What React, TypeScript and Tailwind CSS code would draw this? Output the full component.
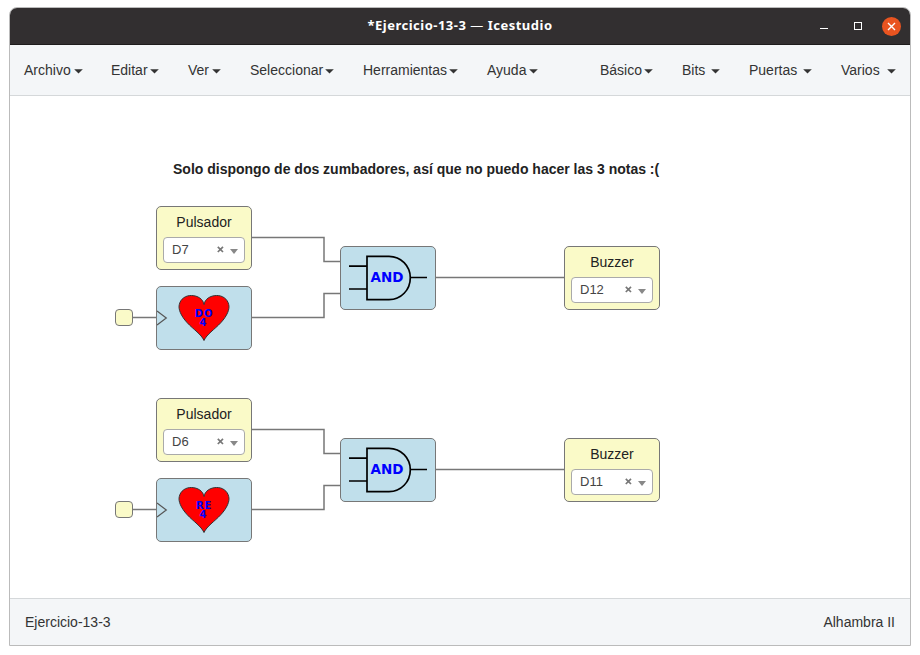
import React from "react";

const sans = "font-['Liberation_Sans',Arial,sans-serif]";

function Caret() {
  return (
    <svg width="9" height="5" viewBox="0 0 9 5" className="mt-[2px] shrink-0">
      <path d="M0.2 0.3H8.8L4.5 4.6Z" fill="#333" />
    </svg>
  );
}

function MenuItem({ label, className }: { label: string; className: string }) {
  return (
    <button className={`flex items-center justify-between whitespace-nowrap ${className}`}>
      <span>{label}</span>
      <Caret />
    </button>
  );
}

function PinBlock({ name, pin, className }: { name: string; pin: string; className: string }) {
  return (
    <div className={`absolute flex h-16 w-24 flex-col rounded-[5px] border border-[#777] bg-[#fafac8] px-1.5 ${className}`}>
      <div className="mt-[5px] text-center text-[14px] leading-5 text-[#222]">{name}</div>
      <div className="mt-[5px] flex h-[26px] items-center rounded-[4px] border border-[#aaa] bg-white pl-2 text-[13px] text-[#444]">
        <span className="w-[45px]">{pin}</span>
        <svg width="7" height="7" viewBox="0 0 7 7" className="-mt-px">
          <path d="M0.8 0.8L6 6M6 0.8L0.8 6" stroke="#777" strokeWidth="1.7" />
        </svg>
        <svg width="8" height="5" viewBox="0 0 8 5" className="mt-[3px] ml-[6px]">
          <path d="M0 0H8L4 5Z" fill="#888" />
        </svg>
      </div>
    </div>
  );
}

function NoteBlock({ note, className }: { note: string; className: string }) {
  return (
    <div className={`absolute h-16 w-24 rounded-[5px] border border-[#777] bg-[#c0dfeb] ${className}`}>
      <svg width="94" height="62" viewBox="0 0 94 62" className="block">
        <path d="M0 24L9.3 31L0 38" fill="none" stroke="#555" strokeWidth="1.2" />
        <path
          d="M47 53.5C44 47 37 43 30 35.5C24 29 21 22 22.3 17.5C23.5 12 28.5 8.3 34.5 8.5C41 8.7 46 12 47 17.5C48 12 53 8.7 59.5 8.5C65.5 8.3 70.5 12 71.7 17.5C73 22 70 29 64 35.5C57 43 50 47 47 53.5Z"
          fill="#f00"
          stroke="#333"
        />
        <g fill="#00f" fontFamily="'DejaVu Sans',sans-serif" fontWeight="bold" fontSize="10" textAnchor="middle">
          <text x="47" y="29.7" letterSpacing="0.8">{note}</text>
          <text x="46" y="39">4</text>
        </g>
      </svg>
    </div>
  );
}

function AndBlock({ className }: { className: string }) {
  return (
    <div className={`absolute h-16 w-24 rounded-[5px] border border-[#777] bg-[#c0dfeb] ${className}`}>
      <svg width="94" height="62" viewBox="0 0 94 62" className="block">
        <g fill="none" stroke="#000" strokeWidth="1.7">
          <path d="M26 9.3H48C60 9.3 69.3 19 69.3 30.7C69.3 43 60 52.6 48 52.6H26Z" />
          <path d="M8 19.2H26M8 42H26M69 30.5H86" />
        </g>
        <text x="46" y="35" textAnchor="middle" fill="#00f" fontFamily="'DejaVu Sans',sans-serif" fontWeight="bold" fontSize="13.5">
          AND
        </text>
      </svg>
    </div>
  );
}

function Circuit({ note, inPin, outPin, className }: { note: string; inPin: string; outPin: string; className: string }) {
  return (
    <div className={`absolute left-[105px] h-36 w-[545px] ${className}`}>
      <svg width="545" height="144" className="absolute inset-0">
        <g fill="none" stroke="#777" strokeWidth="1.5">
          <path d="M17 111.5H41" />
          <path d="M137 31.5H209V55.5H225" />
          <path d="M137 111.5H209V87.5H225" />
          <path d="M321 71.5H449" />
        </g>
      </svg>
      <div className="absolute top-[103px] left-0 h-[17px] w-[18px] rounded-[4px] border border-[#777] bg-[#fafac8]" />
      <PinBlock name="Pulsador" pin={inPin} className="top-0 left-[41px]" />
      <NoteBlock note={note} className="top-20 left-[41px]" />
      <AndBlock className="top-10 left-[225px]" />
      <PinBlock name="Buzzer" pin={outPin} className="top-10 left-[449px]" />
    </div>
  );
}

export default function App() {
  return (
    <div className={`h-[655px] w-[920px] bg-white pt-[7px] pl-[9px] ${sans}`}>
      <div className="flex h-[639px] w-[902px] flex-col overflow-hidden rounded-t-[8px] border border-[#bbb] bg-white">
        <header className="relative flex h-[37px] shrink-0 items-center justify-end border-b border-[#1e1c1c] bg-[#322f30] pr-[9px]">
          <h1 className="absolute inset-x-0 text-center font-['Noto_Sans',sans-serif] text-[13px] font-bold tracking-[0.5px] text-white">
            *Ejercicio-13-3 <span className="font-normal">—</span> Icestudio
          </h1>
          <div className="flex items-center">
            <span className="mt-[5px] mr-[26px] h-px w-2 bg-white" />
            <span className="mr-[20px] h-2 w-2 border border-white" />
            <span className="flex h-[19px] w-[19px] items-center justify-center rounded-full bg-[#e95420]">
              <svg width="9" height="9" viewBox="0 0 9 9">
                <path d="M1 1L8 8M8 1L1 8" stroke="#fff" strokeWidth="1.4" />
              </svg>
            </span>
          </div>
        </header>
        <nav className="flex h-[51px] shrink-0 items-center border-b border-[#d5d8da] bg-[#f4f6f8] pl-[14px] text-[14px] text-[#333]">
          <MenuItem label="Archivo" className="mr-[28px] w-[59px]" />
          <MenuItem label="Editar" className="mr-[29px] w-12" />
          <MenuItem label="Ver" className="mr-[29px] w-[33px]" />
          <MenuItem label="Seleccionar" className="mr-[29px] w-[84px]" />
          <MenuItem label="Herramientas" className="mr-[29px] w-[95px]" />
          <MenuItem label="Ayuda" className="mr-[62px] w-[51px]" />
          <MenuItem label="Básico" className="mr-[29px] w-[53px]" />
          <MenuItem label="Bits" className="mr-[29px] w-[38px]" />
          <MenuItem label="Puertas" className="mr-[29px] w-[63px]" />
          <MenuItem label="Varios" className="w-[55px]" />
        </nav>
        <main className="relative min-h-0 flex-1">
          <p className="absolute top-[63px] left-[163px] text-[14px] leading-5 font-bold whitespace-nowrap text-[#222]">
            Solo dispongo de dos zumbadores, así que no puedo hacer las 3 notas :(
          </p>
          <Circuit note="DO" inPin="D7" outPin="D12" className="top-[110px]" />
          <Circuit note="RE" inPin="D6" outPin="D11" className="top-[302px]" />
        </main>
        <footer className="flex h-[47px] shrink-0 items-center justify-between border-t border-[#d5d8da] bg-[#f4f6f8] px-[15px] text-[14px] text-[#333]">
          <span>Ejercicio-13-3</span>
          <span>Alhambra II</span>
        </footer>
      </div>
    </div>
  );
}
